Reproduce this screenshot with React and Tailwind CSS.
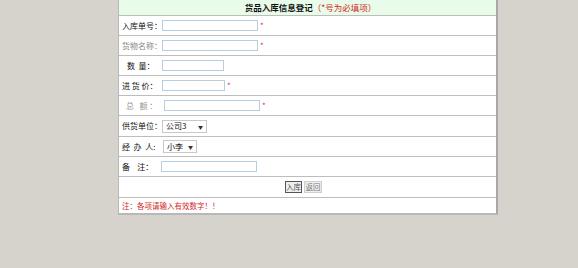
import React from "react";

const Star = () => <span className="text-[#e0305a] ml-[2px] text-[8px] leading-none">*</span>;

function Row({ children, h = "h-[20px]" }) {
  return (
    <div className={`${h} flex items-center border-t border-[#bdbdbd] pl-[3px] whitespace-nowrap`}>
      {children}
    </div>
  );
}

function Input({ w }) {
  return <div className={`${w} h-[11px] shrink-0 border border-[#b7cde0] bg-white`} />;
}

function Select({ w, text }) {
  return (
    <div className={`${w} h-[13px] shrink-0 border border-[#c8c8c8] bg-white flex items-center justify-between px-[3px]`}>
      <span className="text-[8px] leading-none text-[#111]">{text}</span>
      <span className="text-[5px] leading-none text-[#333]">▼</span>
    </div>
  );
}

function Label({ w, cls, children }) {
  return <span className={`${w} shrink-0 whitespace-pre text-[8px] leading-none ${cls}`}>{children}</span>;
}

export default function App() {
  return (
    <div
      className="w-[578px] h-[268px] bg-[#d6d3cc] leading-none"
      style={{ fontFamily: '"Noto Sans CJK SC", "Noto Sans", sans-serif' }}
    >
      <div className="ml-[118px] w-[380px] bg-white border-l border-[#b8b8b8] border-r-2 border-b-2 border-r-[#a8a8a8] border-b-[#b8b8b8]">
        <div className="h-[15px] bg-[#e9fbe9] flex items-center justify-center whitespace-nowrap text-[8.5px] pl-[6px]">
          <span className="font-bold text-[#111]">货品入库信息登记</span>
          <span className="text-[#d22a2a]">（*号为必填项）</span>
        </div>
        <Row>
          <Label w="w-[40px]" cls="text-[#111]">入库单号：</Label>
          <Input w="w-[96px]" />
          <Star />
        </Row>
        <Row>
          <Label w="w-[40px]" cls="text-[#888]">货物名称：</Label>
          <Input w="w-[96px]" />
          <Star />
        </Row>
        <Row>
          <Label w="w-[40px]" cls="text-[#111] pl-[5px]">{"数  量："}</Label>
          <Input w="w-[62px]" />
        </Row>
        <Row>
          <Label w="w-[40px]" cls="text-[#111]">{"进 货 价："}</Label>
          <Input w="w-[63px]" />
          <Star />
        </Row>
        <Row>
          <Label w="w-[42px]" cls="text-[#999] pl-[4px]">{"总   额 ："}</Label>
          <Input w="w-[96px]" />
          <Star />
        </Row>
        <Row h="h-[21px]">
          <Label w="w-[40px]" cls="text-[#111]">供货单位：</Label>
          <Select w="w-[45px]" text="公司3" />
        </Row>
        <Row>
          <Label w="w-[41px]" cls="text-[#111]">{"经  办  人:"}</Label>
          <Select w="w-[34px]" text="小李" />
        </Row>
        <Row>
          <Label w="w-[39px]" cls="text-[#111]">{"备    注："}</Label>
          <Input w="w-[96px]" />
        </Row>
        <div className="h-[21px] flex items-center justify-center gap-[2px] border-t border-[#bdbdbd] whitespace-nowrap pr-[8px]">
          <div className="w-[17px] h-[12px] border border-[#555] bg-[#eeeeee] flex items-center justify-center text-[#555] text-[7.5px]">入库</div>
          <div className="w-[18px] h-[12px] border border-[#cfcfcf] bg-[#f0f0f0] flex items-center justify-center text-[#777] text-[7.5px]">返回</div>
        </div>
        <div className="h-[16px] flex items-center border-t border-[#bdbdbd] pl-[3px] text-[#d02a2a] text-[7.5px] whitespace-nowrap">
          注：各项请输入有效数字！！
        </div>
      </div>
    </div>
  );
}
